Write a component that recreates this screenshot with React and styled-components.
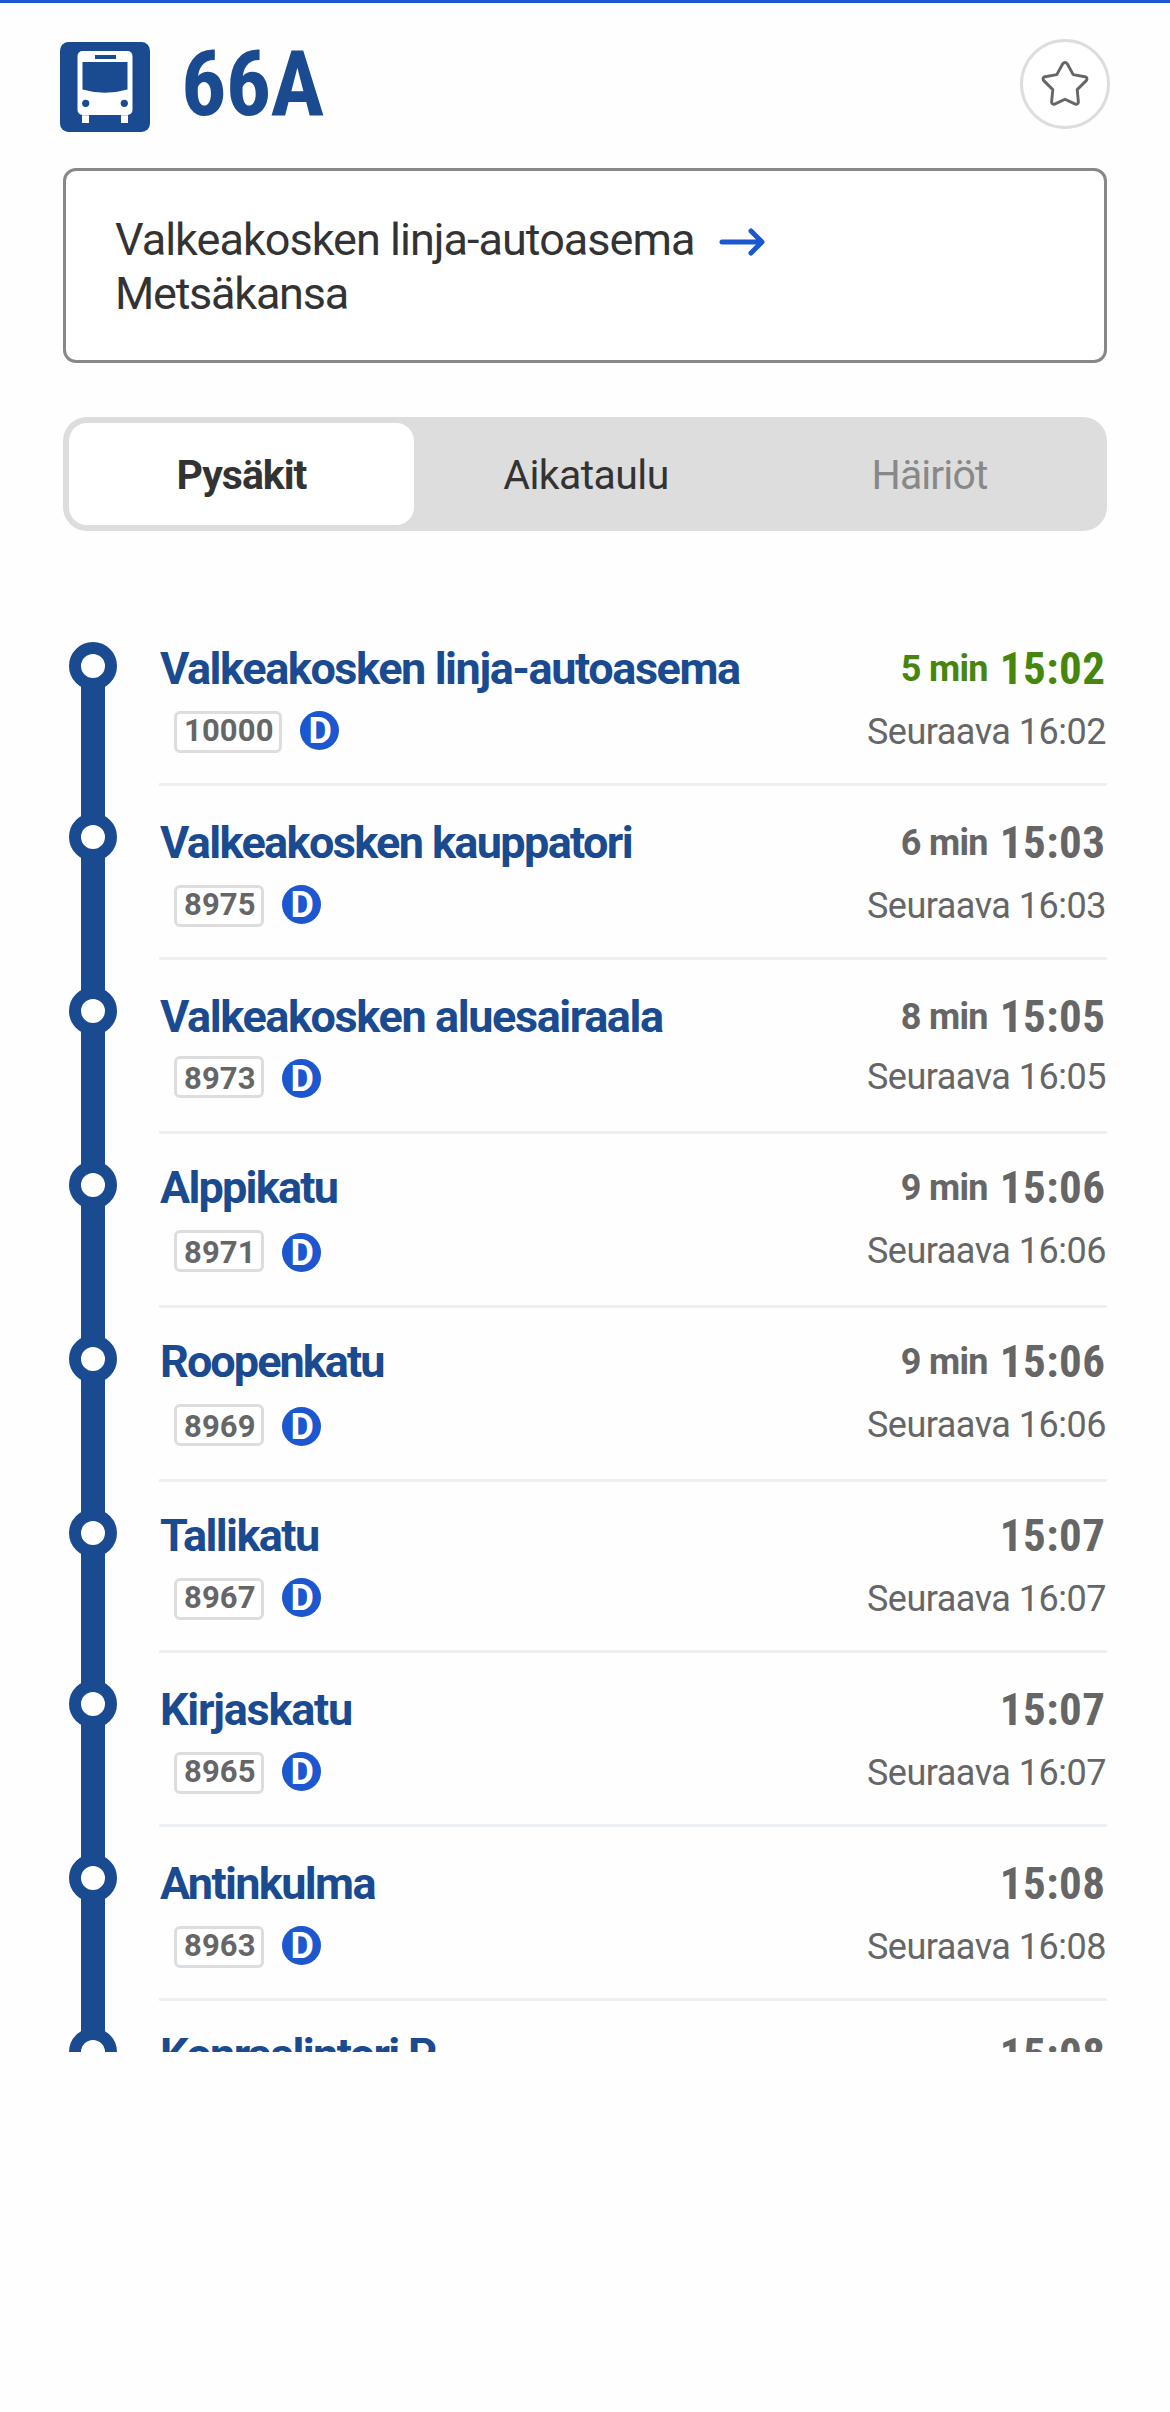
import React from "react";
import styled, { createGlobalStyle } from "styled-components";

const NAVY = "#1a4a8f";
const BLUE = "#1c57cf";
const GREY = "#666";

const Global = createGlobalStyle`
  body { margin: 0; background: #fefefe; font-family: Roboto, "Liberation Sans", sans-serif; }
  * { box-sizing: border-box; }
`;

const Page = styled.main`
  width: 1170px;
  height: 2412px;
  border-top: 3px solid ${BLUE};
  overflow: hidden;
`;

const Header = styled.header`
  display: flex;
  align-items: flex-start;
  height: 165px;
  padding: 36px 60px 0;
`;

const BusIcon = styled.svg`
  width: 90px;
  height: 90px;
  margin-top: 3px;
  flex: none;
`;

const RouteName = styled.h1`
  margin: 1px auto 0 31px;
  color: ${NAVY};
  font: 700 90px/90px "Roboto Condensed", Roboto, sans-serif;
  letter-spacing: -0.7px;
`;

const FavouriteButton = styled.button`
  display: flex;
  align-items: center;
  justify-content: center;
  width: 90px;
  height: 90px;
  padding: 0;
  border: 3px solid #ddd;
  border-radius: 50%;
  background: #fff;
`;

const Direction = styled.button`
  display: block;
  width: 1044px;
  height: 195px;
  margin: 0 0 0 63px;
  padding: 2px 49px 0;
  border: 3px solid #888;
  border-radius: 13px;
  background: #fff;
  color: #333;
  font: 400 45px/54px Roboto, sans-serif;
  text-align: left;
`;

const Place = styled.span`
  letter-spacing: ${(p) => p.$track}px;
`;

const Arrow = styled.svg`
  width: 46px;
  height: 38px;
  margin-left: 25px;
  vertical-align: -6px;
`;

const Tabs = styled.nav`
  display: grid;
  grid-template-columns: 345px 344px 343px;
  width: 1044px;
  height: 114px;
  margin: 54px 0 0 63px;
  padding: 6px;
  border-radius: 24px;
  background: #ddd;
`;

const Tab = styled.button`
  border: 0;
  padding: 1px 0 0;
  border-radius: 18px;
  background: ${(p) => (p.$active ? "#fff" : "transparent")};
  color: ${(p) => (p.$muted ? "#888" : "#333")};
  font: ${(p) => (p.$active ? 700 : 400)} 41px/50px Roboto, sans-serif;
  letter-spacing: ${(p) => p.$track}px;
`;

const StopList = styled.ul`
  height: 1440px;
  margin: 81px 0 0;
  padding: 0 63px 0 69px;
  overflow: hidden;
  list-style: none;
`;

const StopRow = styled.li`
  display: flex;
  height: ${(p) => p.$height}px;
`;

const Rail = styled.div`
  width: 48px;
  flex: none;
  margin-top: ${(p) => p.$offset}px;
`;

const Marker = styled.div`
  position: relative;
  width: 48px;
  height: 48px;
  border: 12px solid ${NAVY};
  border-radius: 50%;
  background: #fff;
`;

const Line = styled.div`
  width: 24px;
  height: 140px;
  margin: -6px auto 0;
  background: ${NAVY};
`;

const StopBody = styled.div`
  display: flex;
  justify-content: space-between;
  width: 948px;
  margin-left: 42px;
  border-bottom: 3px solid #ecf0f3;
`;

const StopInfo = styled.div`
  padding-top: ${(p) => p.$offset}px;
`;

const StopName = styled.div`
  padding-left: 1px;
  color: ${NAVY};
  font: 700 45px/54px Roboto, sans-serif;
  letter-spacing: ${(p) => p.$track}px;
  white-space: nowrap;
`;

const Meta = styled.div`
  display: flex;
  margin: ${(p) => p.$gap}px 0 0 15px;
`;

const Code = styled.span`
  height: 42px;
  padding: 0 5px 0 7px;
  border: 3px solid #ddd;
  border-radius: 6px;
  background: #fff;
  color: ${GREY};
  font: 700 31px Roboto, sans-serif;
  line-height: ${(p) => (p.$drop ? 39 : 33)}px;
  letter-spacing: 0.15px;
`;

const Zone = styled.span`
  width: 39px;
  height: 39px;
  margin: ${(p) => p.$drop}px 0 0 18px;
  padding-left: 2px;
  border-radius: 50%;
  background: ${BLUE};
  color: #fff;
  font: 700 36px/41px Roboto, sans-serif;
  text-align: center;
`;

const Times = styled.div`
  padding-top: ${(p) => p.$offset}px;
  text-align: right;
  white-space: nowrap;
`;

const Departure = styled.div`
  display: flex;
  justify-content: flex-end;
  align-items: baseline;
  height: 54px;
  padding-right: 1.5px;
  color: ${(p) => (p.$live ? "#46860c" : GREY)};
`;

const Minutes = styled.span`
  position: relative;
  top: -3px;
  margin-right: 12px;
  font: 700 36px/54px Roboto, sans-serif;
  letter-spacing: -0.7px;
`;

const Clock = styled.span`
  font: 700 45px/54px "Roboto Condensed", Roboto, sans-serif;
  letter-spacing: 0.5px;
`;

const Next = styled.div`
  margin-top: ${(p) => p.$gap}px;
  padding-right: 1px;
  color: ${GREY};
  font: 400 36px/42px Roboto, sans-serif;
  letter-spacing: -0.5px;
`;

const stops = [
  { name: "Valkeakosken linja-autoasema", track: -1.43, code: "10000", min: "5 min", time: "15:02", next: "16:02", live: true, height: 174, rail: 30, top: 30, meta: 15, nextGap: 15 },
  { name: "Valkeakosken kauppatori", track: -1.64, code: "8975", min: "6 min", time: "15:03", next: "16:03", height: 174, rail: 27, top: 30, meta: 15, nextGap: 15 },
  { name: "Valkeakosken aluesairaala", track: -1.4, code: "8973", min: "8 min", time: "15:05", next: "16:05", height: 174, rail: 27, top: 30, meta: 12, nextGap: 12, drop: 3 },
  { name: "Alppikatu", track: -1.8, code: "8971", min: "9 min", time: "15:06", next: "16:06", height: 174, rail: 27, top: 27, meta: 15, nextGap: 15, drop: 3 },
  { name: "Roopenkatu", track: -1.95, code: "8969", min: "9 min", time: "15:06", next: "16:06", height: 174, rail: 27, top: 27, meta: 15, nextGap: 15, drop: 3 },
  { name: "Tallikatu", track: -1.6, code: "8967", time: "15:07", next: "16:07", height: 171, rail: 27, top: 27, meta: 15, nextGap: 15 },
  { name: "Kirjaskatu", track: -1.25, code: "8965", time: "15:07", next: "16:07", height: 174, rail: 27, top: 30, meta: 15, nextGap: 15 },
  { name: "Antinkulma", track: -1.65, code: "8963", time: "15:08", next: "16:08", height: 174, rail: 27, top: 30, meta: 15, nextGap: 15 },
  { name: "Konraalintori P", track: -1.66, time: "15:08", height: 174, rail: 27, top: 27 },
];

export default function App() {
  return (
    <Page>
      <Global />
      <Header>
        <BusIcon viewBox="0 0 90 90">
          <rect width="90" height="90" rx="8.5" fill={NAVY} />
          <rect x="17.5" y="9" width="55" height="64" rx="5" fill="#fff" />
          <path d="M22 73.3h7V81h-7zM61 73.3h7V81h-7z" fill="#fff" />
          <path d="M35 13h21v4H35zM22.5 20h45v27.5Q45 54 22.5 47.5z" fill={NAVY} />
          <circle cx="25.7" cy="61.3" r="3.6" fill={NAVY} />
          <circle cx="64.3" cy="61.3" r="3.6" fill={NAVY} />
        </BusIcon>
        <RouteName>66A</RouteName>
        <FavouriteButton aria-label="Suosikki">
          <svg width="84" height="84" viewBox="0 0 84 84" fill="none" stroke={GREY} strokeWidth="2.9" strokeLinejoin="round">
            <path d="M39.6 22q2.4-3 4.8 0l5.8 10.6 11.7 2.1q3.1.9 1.6 3.7L54.2 47.6l1.2 12.2q-.3 3.1-3.1 2.3L42 57.2l-10.3 4.9q-2.8.8-3.1-2.3l1.2-12.2-9.3-9.2q-1.5-2.8 1.6-3.7l11.7-2.1z" />
          </svg>
        </FavouriteButton>
      </Header>
      <Direction>
        <Place $track={-0.98}>Valkeakosken linja-autoasema</Place>
        <Arrow viewBox="0 0 46 38" fill="none" stroke={BLUE} strokeWidth="5" strokeLinecap="round" strokeLinejoin="round">
          <path d="M3 19h39M32 8 43 19 32 30" />
        </Arrow>
        <br />
        <Place $track={-1.25}>Metsäkansa</Place>
      </Direction>
      <Tabs>
        <Tab $active $track={-1}>Pysäkit</Tab>
        <Tab $track={-0.6}>Aikataulu</Tab>
        <Tab $muted $track={-0.9}>Häiriöt</Tab>
      </Tabs>
      <StopList>
        {stops.map((s) => (
          <StopRow key={s.name} $height={s.height}>
            <Rail $offset={s.rail}>
              <Marker />
              <Line />
            </Rail>
            <StopBody>
              <StopInfo $offset={s.top}>
                <StopName $track={s.track}>{s.name}</StopName>
                {s.code && (
                  <Meta $gap={s.meta}>
                    <Code $drop={s.drop}>{s.code}</Code>
                    <Zone $drop={s.drop || 0}>D</Zone>
                  </Meta>
                )}
              </StopInfo>
              <Times $offset={s.top}>
                <Departure $live={s.live}>
                  {s.min && <Minutes>{s.min}</Minutes>}
                  <Clock>{s.time}</Clock>
                </Departure>
                {s.next && <Next $gap={s.nextGap}>Seuraava {s.next}</Next>}
              </Times>
            </StopBody>
          </StopRow>
        ))}
      </StopList>
    </Page>
  );
}
